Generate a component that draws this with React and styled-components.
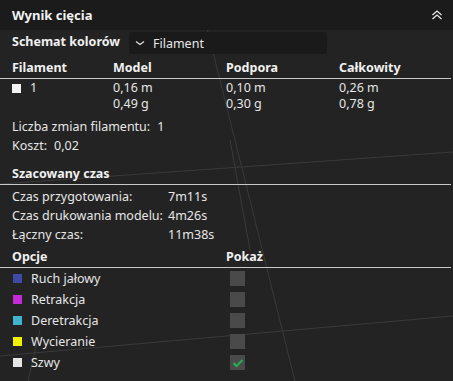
import React from "react";
import styled, { createGlobalStyle } from "styled-components";

const Global = createGlobalStyle`
  html, body { margin: 0; padding: 0; background: #222222; }
  body { font-family: "Noto Sans", "Open Sans", sans-serif; }
`;

const Panel = styled.div`
  position: relative;
  width: 453px;
  height: 381px;
  background: #232323;
  color: #e6e6e6;
  font-size: 12.5px;
  overflow: hidden;
`;

const Backdrop = styled.svg`
  position: absolute;
  inset: 0;
  pointer-events: none;
`;

const Content = styled.div`
  position: relative;
  display: flex;
  flex-direction: column;
`;

const Header = styled.div`
  height: 30px;
  display: flex;
  align-items: center;
  justify-content: space-between;
  padding: 0 10px 0 12px;
  background: #1b1b1b;
`;

const Title = styled.span`
  font-weight: 700;
  font-size: 13px;
  color: #f2f2f2;
`;

const Bold = styled.span`
  font-weight: 700;
  font-size: 12.5px;
  color: #f0f0f0;
`;

const SchemeLabel = styled(Bold)`
  margin-bottom: 3px;
`;

const SchemeRow = styled.div`
  display: flex;
  align-items: center;
  gap: 9px;
  padding-left: 12px;
  height: 26px;
`;

const Combo = styled.div`
  width: 198px;
  height: 22px;
  border-radius: 3px;
  background: #1a1a1a;
  display: flex;
  align-items: center;
  gap: 8px;
  padding-left: 6px;
  box-sizing: border-box;
  font-size: 12.5px;
  color: #e6e6e6;
`;

const TableHead = styled.div`
  display: grid;
  grid-template-columns: ${(p) => p.$cols};
  align-items: center;
  height: 22px;
  margin-top: ${(p) => p.$mt || 0}px;
  padding-left: 12px;
  border-bottom: 1px solid #c8c8c8;
  margin-right: 2px;
`;

const DataRow = styled.div`
  display: grid;
  grid-template-columns: 101px 113px 113px 1fr;
  padding: 1px 0 0 12px;
  line-height: 16px;
`;

const Cell = styled.div`
  display: flex;
  flex-direction: column;
`;

const Swatch = styled.span`
  display: inline-block;
  width: 9px;
  height: 9px;
  background: ${(p) => p.$color};
  margin-right: ${(p) => p.$mr || 9}px;
  flex-shrink: 0;
`;

const NameCell = styled.div`
  display: flex;
  align-items: center;
  height: 16px;
`;

const InfoLine = styled.div`
  padding-left: 12px;
  height: 19px;
  display: flex;
  align-items: center;
  gap: 7px;
  margin-top: ${(p) => p.$mt || 0}px;
`;

const TimeList = styled.div`
  display: flex;
  flex-direction: column;
  padding-top: 2px;
`;

const TimeRow = styled.div`
  display: grid;
  grid-template-columns: 156px 1fr;
  padding-left: 12px;
  height: 19px;
  align-items: center;
`;

const SectionTitle = styled.div`
  padding-left: 12px;
  height: 22px;
  display: flex;
  align-items: center;
  margin-top: ${(p) => p.$mt || 0}px;
  border-bottom: ${(p) => (p.$line ? "1px solid #c8c8c8" : "none")};
  margin-right: 2px;
`;

const OptionRow = styled.div`
  display: grid;
  grid-template-columns: 217px 1fr;
  padding-left: 13px;
  height: 21px;
  align-items: center;
`;

const OptionLabel = styled.div`
  display: flex;
  align-items: center;
`;

const Check = styled.div`
  width: 15px;
  height: 15px;
  background: #4a4a4a;
  display: flex;
  align-items: center;
  justify-content: center;
`;

const times = [
  ["Czas przygotowania:", "7m11s"],
  ["Czas drukowania modelu:", "4m26s"],
  ["Łączny czas:", "11m38s"],
];

const options = [
  ["Ruch jałowy", "#3d4aa6", false],
  ["Retrakcja", "#c42ad6", false],
  ["Deretrakcja", "#40b4cc", false],
  ["Wycieranie", "#f2f200", false],
  ["Szwy", "#e6e6e6", true],
];

export default function App() {
  return (
    <Panel>
      <Global />
      <Backdrop width="453" height="381" viewBox="0 0 453 381">
        <g stroke="#3a3a3a" strokeWidth="1" fill="none">
          <line x1="200" y1="0" x2="295" y2="381" />
          <line x1="0" y1="184" x2="453" y2="152" />
          <line x1="0" y1="356" x2="453" y2="316" />
          <line x1="230" y1="140" x2="250" y2="250" />
          <line x1="28" y1="381" x2="40" y2="330" />
        </g>
      </Backdrop>
      <Content>
        <Header>
          <Title>Wynik cięcia</Title>
          <svg width="12" height="12" viewBox="0 0 12 12">
            <path d="M1.5 6 L6 2 L10.5 6 M1.5 10 L6 6 L10.5 10" stroke="#e8e8e8" strokeWidth="1.3" fill="none" />
          </svg>
        </Header>
        <SchemeRow>
          <SchemeLabel>Schemat kolorów</SchemeLabel>
          <Combo>
            <svg width="10" height="6" viewBox="0 0 10 6">
              <path d="M1 1.5 L5 4.5 L9 1.5" stroke="#e6e6e6" strokeWidth="1.1" fill="none" />
            </svg>
            <span>Filament</span>
          </Combo>
        </SchemeRow>
        <TableHead $cols="101px 113px 113px 1fr">
          <Bold>Filament</Bold>
          <Bold>Model</Bold>
          <Bold>Podpora</Bold>
          <Bold>Całkowity</Bold>
        </TableHead>
        <DataRow>
          <NameCell>
            <Swatch $color="#f2f2f2" />1
          </NameCell>
          <Cell>
            <span>0,16 m</span>
            <span>0,49 g</span>
          </Cell>
          <Cell>
            <span>0,10 m</span>
            <span>0,30 g</span>
          </Cell>
          <Cell>
            <span>0,26 m</span>
            <span>0,78 g</span>
          </Cell>
        </DataRow>
        <InfoLine $mt={5}>
          <span>Liczba zmian filamentu:</span>
          <span>1</span>
        </InfoLine>
        <InfoLine>
          <span>Koszt:</span>
          <span>0,02</span>
        </InfoLine>
        <SectionTitle $mt={7} $line>
          <Bold>Szacowany czas</Bold>
        </SectionTitle>
        <TimeList>
          {times.map(([k, v]) => (
            <TimeRow key={k}>
              <span>{k}</span>
              <span>{v}</span>
            </TimeRow>
          ))}
        </TimeList>
        <TableHead $cols="214px 1fr" $mt={1}>
          <Bold>Opcje</Bold>
          <Bold>Pokaż</Bold>
        </TableHead>
        {options.map(([label, color, checked]) => (
          <OptionRow key={label}>
            <OptionLabel>
              <Swatch $color={color} $mr={9} />
              {label}
            </OptionLabel>
            <Check>
              {checked && (
                <svg width="12" height="10" viewBox="0 0 12 10">
                  <path d="M1.5 5 L4.5 8 L10.5 2" stroke="#22b14c" strokeWidth="2" fill="none" />
                </svg>
              )}
            </Check>
          </OptionRow>
        ))}
      </Content>
    </Panel>
  );
}
